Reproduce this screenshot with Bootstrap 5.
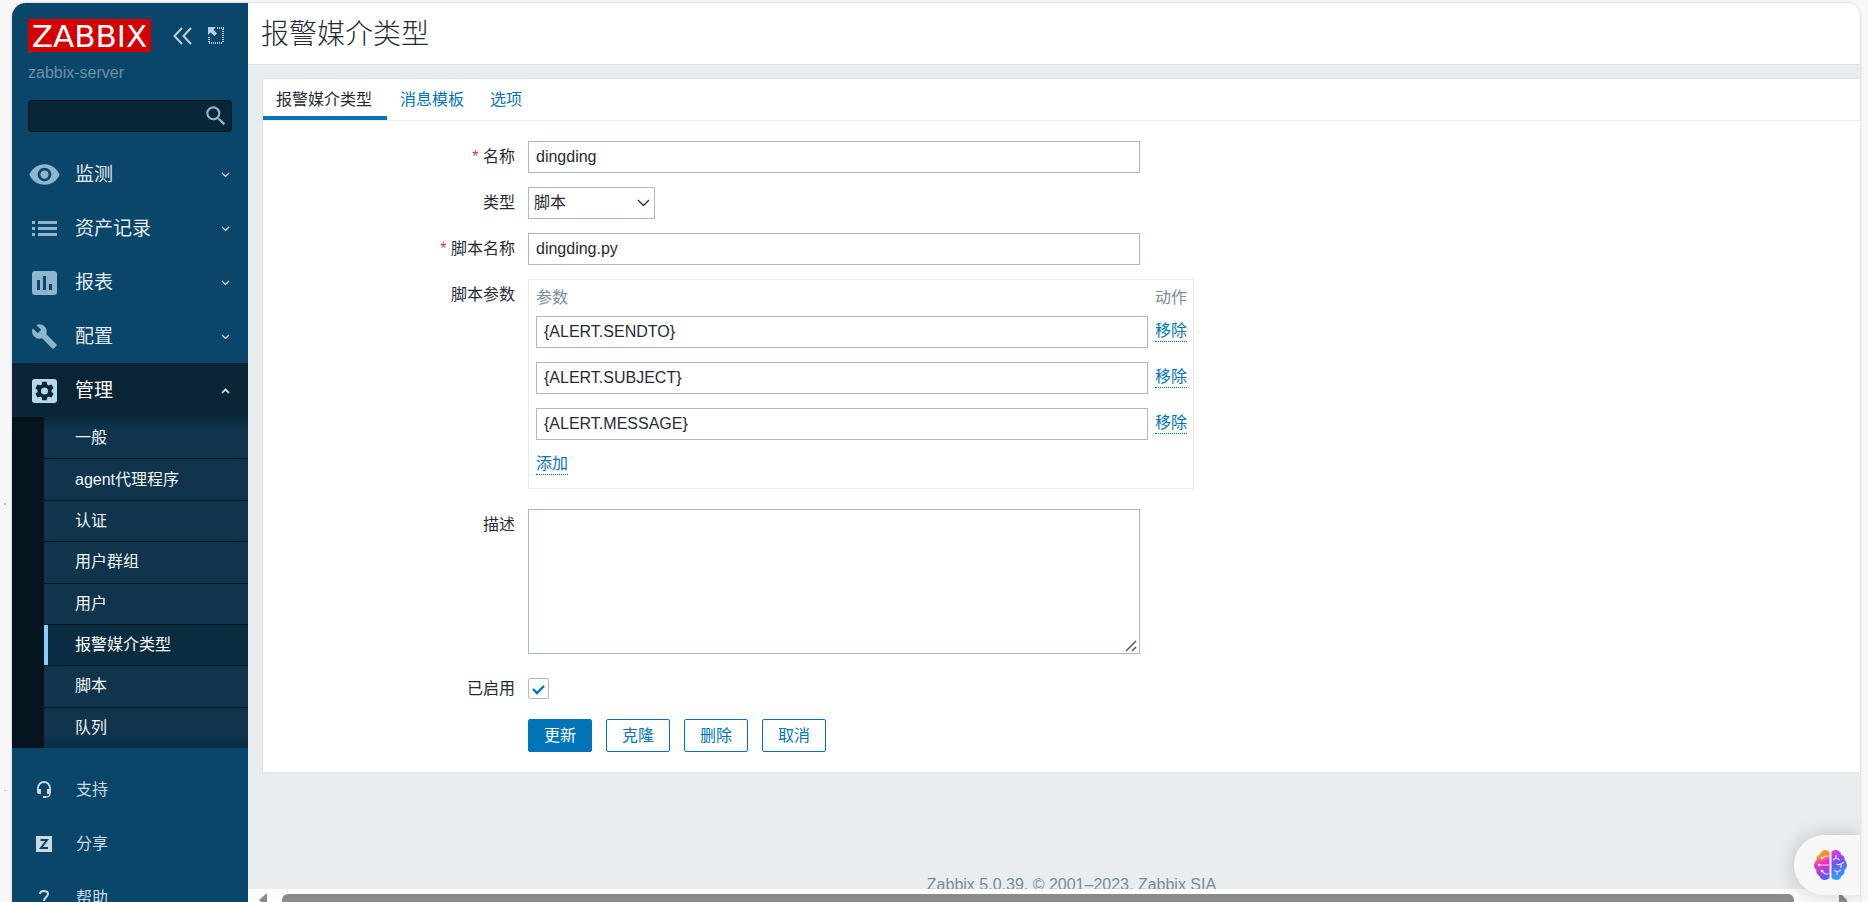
<!DOCTYPE html>
<html lang="zh-CN">
<head>
<meta charset="utf-8">
<meta name="viewport" content="width=device-width, initial-scale=1">
<title>报警媒介类型</title>
<link rel="stylesheet" href="https://cdn.jsdelivr.net/npm/bootstrap@5.3.0/dist/css/bootstrap.min.css">
<style>
body{background:#f7f7f7;color:#1f2c33;font:400 16px/20px "Liberation Sans","Noto Sans CJK SC",sans-serif;padding:3px 8px 0 12px}
a{color:#0275b8;text-decoration:none}
.app-frame{border-radius:14px 14px 0 0;background:#e9edf0;box-shadow:0 0 2px 1px #dcdfe1}
/* sidebar */
.side{width:236px;background:#0a466a;color:#e2eaef}
.side a{color:inherit}
.side-head{padding:16px 16px 15px}
.logo{width:123px;height:33px;background:#d40000;color:#fff;font:31px/34px "DejaVu Sans",sans-serif}
.icon-btn{border:0;background:none;padding:0;color:#b8cfdd;display:flex}
.server{color:#6d8fa8;margin-top:11px}
.search{height:32px;background:#082638;border:1px solid #03121c;border-radius:4px;margin-top:17px}
.search input{min-width:0;background:none;border:0;color:#fff;outline:0}
.search button{padding-right:2px;color:#8fb3cd}
.menu-row{height:54px;padding:1px 18px 0 12px;font-size:19px}
.menu-row .pic{width:30px;margin:0 16px 0 5px;color:#8fb5cf}
.menu-row.open{background:#0a2535;color:#fff}
.menu-row.open .pic{color:#b5d8ee}
.pic{display:flex;justify-content:center;flex:none}
.sub{padding-left:32px;background:#04151f;box-shadow:inset 0 5px 6px -4px #0006}
.sub ul{display:grid;grid-auto-rows:1fr;min-height:331px;background:linear-gradient(#0b2a3e,#0f344c 12px,#0f344c 320px,#0c2c41)}
.sub a{height:100%;padding-left:27px;border-left:4px solid transparent;color:#f2f6f8;font-size:16px}
.sub li+li{border-top:1px solid #041520}
.sub a.chosen{border-left-color:#85ceff;background:#0a2c40;color:#fff}
.extra{padding-top:15px}
.extra a{height:54px;color:#cbd9e2}
.extra .pic{width:20px;margin:0 22px 0 22px}
/* page */
.page-head{height:62px;background:#fff;border-bottom:1px solid #dfe4e7;padding:2px 13px 0;flex:none}
.page-head h1{font-size:28px;line-height:36px}
.panel{background:#fff;border:1px solid #dfe4e7;border-right:0;margin:13px 0 0 14px}
.tabs{border-bottom:1px solid #ebeef0}
.tabs a{height:41px;padding:4px 13px 0;border-bottom:4px solid transparent}
.tabs a.on{padding-right:15px;border-color:#0275b8;color:#1f2c33}
.fields{padding:20px 0}
.line{display:flex;gap:13px;margin-bottom:14px}
.line>.cap{width:252px;flex:none;text-align:right;line-height:32px}
.star{color:#e33734}
.box{display:block;width:612px;height:32px;border:1px solid #acbbc2;border-radius:0;background:#fff;padding:0 7px;color:#1f2c33;outline:0}
.sel{position:relative}
.sel select{width:127px;appearance:none;padding:0 5px}
.sel svg{position:absolute;right:5px;top:11px;pointer-events:none}
.params{border:1px solid #e9ecee;padding:0 6px 0 7px;width:666px}
.params th{height:36px;font-weight:inherit;color:#768d99}
.params td,.params th{padding:0;vertical-align:top}
.params th{vertical-align:middle}
.params tbody td{height:46px}
.params td:last-child,.params th:last-child{text-align:right}
.params tfoot td{height:34px}
.dots{display:inline-block;border:0;border-bottom:1px dotted #0275b8;background:none;color:#0275b8;padding:0;line-height:20px;margin-top:5px}
.params tfoot .dots{margin-top:0}
textarea.box{height:145px}
textarea::-webkit-resizer{background:url("data:image/svg+xml,%3Csvg xmlns='http://www.w3.org/2000/svg' viewBox='0 0 15 15'%3E%3Cpath d='M2 13L12 3M8 13l4-4' stroke='%23555' stroke-width='1.500'/%3E%3C/svg%3E")}
.tick{appearance:none;width:21px;height:21px;margin:0;border:1px solid #acbbc2;border-radius:2px;background:#fff url("data:image/svg+xml,%3Csvg xmlns='http://www.w3.org/2000/svg' viewBox='0 0 19 19'%3E%3Cpath d='M4 10l4 4 7-7' fill='none' stroke='%230275b8' stroke-width='2.4'/%3E%3C/svg%3E")}
.act{width:64px;height:33px;border:1px solid #0275b8;border-radius:2px;background:#fff;color:#0275b8;padding:0;font-size:16px;line-height:20px}
.act.main-act{background:#0275b8;color:#fff}
.acts{gap:14px}
.foot{color:#768d99;margin:102px -35px 0 0;text-align:center}
.hscroll{height:13px;background:#fcfcfc;left:0;right:0;bottom:0;padding:0 13px 0 11px;gap:15px}
.hscroll i{height:8px;background:#8b8b8b;border-radius:6px 6px 0 0;margin-right:30px}
.assist{right:0;bottom:7px;width:66px;height:60px;border:0;border-radius:30px 0 0 30px;background:#f8f8f8;box-shadow:0 0 20px #0003;padding:0 13px 0 20px}
.speck{left:4px;width:2px;background:#bbb}
</style>
<script src="https://cdn.jsdelivr.net/npm/bootstrap@5.3.0/dist/js/bootstrap.bundle.min.js"></script>
</head>
<body class="vh-100 overflow-hidden">
<span class="speck position-absolute" style="top:503px;height:2px"></span>
<span class="speck position-absolute" style="top:790px;height:1px"></span>
<div class="app-frame d-flex h-100 overflow-hidden">
  <aside class="side flex-shrink-0">
    <div class="side-head">
      <div class="d-flex align-items-center">
        <a href="#" class="logo text-center text-white">ZABBIX</a>
        <button class="icon-btn ms-auto" aria-label="收起侧边栏"><svg width="19" height="18" viewBox="0 0 19 18" fill="none" stroke="currentColor" stroke-width="2"><path d="M9 1L1.500 9 9 17M18 1l-7.500 8 7.500 8"/></svg></button>
        <button class="icon-btn ms-3 me-2" aria-label="隐藏侧边栏"><svg width="16" height="17" viewBox="0 0 16 17"><path d="M0 0h8L5.500 2.500 9 6.500 6.500 9 2.500 5.500 0 8z" fill="currentColor"/><path d="M9 1h7M15 2v14M1 10v6M1 16h14" fill="none" stroke="currentColor" stroke-width="2" stroke-dasharray="1 1"/></svg></button>
      </div>
      <div class="server">zabbix-server</div>
      <form class="search d-flex align-items-center" role="search">
        <input type="text" class="flex-fill" aria-label="搜索">
        <button type="button" class="icon-btn" aria-label="搜索"><svg width="26" height="26" viewBox="0 0 24 24" fill="currentColor"><path d="M15.500 14h-.79l-.28-.27A6.470 6.470 0 0 0 16 9.500 6.500 6.500 0 1 0 9.500 16c1.610 0 3.090-.59 4.230-1.570l.27.28v.79l5 4.990L20.490 19l-4.990-5zm-6 0C7.010 14 5 11.990 5 9.500S7.010 5 9.500 5 14 7.010 14 9.500 11.990 14 9.500 14z"/></svg></button>
      </form>
    </div>
    <nav>
      <a href="#" class="menu-row d-flex align-items-center"><span class="pic"><svg width="33" height="33" viewBox="0 0 24 24" fill="currentColor" class="flex-shrink-0"><path d="M12 4.500C7 4.500 2.730 7.610 1 12c1.730 4.390 6 7.500 11 7.500s9.270-3.110 11-7.500c-1.730-4.390-6-7.500-11-7.500zM12 17a5 5 0 1 1 0-10 5 5 0 0 1 0 10zm0-8a3 3 0 1 0 0 6 3 3 0 0 0 0-6z"/></svg></span>监测<svg class="ms-auto" width="9" height="6" viewBox="0 0 9 6" fill="none" stroke="currentColor" stroke-width="1.200"><path d="M1 1l3.500 3.500L8 1"/></svg></a>
      <a href="#" class="menu-row d-flex align-items-center"><span class="pic"><svg width="25" height="15" viewBox="0 0 25 15" fill="currentColor"><path d="M0 0h3v3H0zM6 0h19v3H6zM0 6h3v3H0zM6 6h19v3H6zM0 12h3v3H0zM6 12h19v3H6z"/></svg></span>资产记录<svg class="ms-auto" width="9" height="6" viewBox="0 0 9 6" fill="none" stroke="currentColor" stroke-width="1.200"><path d="M1 1l3.500 3.500L8 1"/></svg></a>
      <a href="#" class="menu-row d-flex align-items-center"><span class="pic"><svg width="25" height="24" viewBox="0 0 25 24" fill="currentColor" fill-rule="evenodd"><path d="M3 0h19a3 3 0 0 1 3 3v18a3 3 0 0 1-3 3H3a3 3 0 0 1-3-3V3a3 3 0 0 1 3-3zM5 9v10h3V9zM11 5v14h3V5zM17 13v6h3v-6z"/></svg></span>报表<svg class="ms-auto" width="9" height="6" viewBox="0 0 9 6" fill="none" stroke="currentColor" stroke-width="1.200"><path d="M1 1l3.500 3.500L8 1"/></svg></a>
      <a href="#" class="menu-row d-flex align-items-center"><span class="pic"><svg width="27" height="27" viewBox="0 0 24 24" fill="currentColor"><path d="M22.700 19l-9.100-9.100c.9-2.300.4-5-1.500-6.900-2-2-5-2.400-7.400-1.300L9 6 6 9 1.600 4.700C.4 7.100.9 10.100 2.900 12.100c1.900 1.900 4.600 2.400 6.900 1.500l9.100 9.100c.4.4 1 .4 1.400 0l2.300-2.300c.5-.4.5-1.100.1-1.400z"/></svg></span>配置<svg class="ms-auto" width="9" height="6" viewBox="0 0 9 6" fill="none" stroke="currentColor" stroke-width="1.200"><path d="M1 1l3.500 3.500L8 1"/></svg></a>
      <a href="#" class="menu-row open d-flex align-items-center"><span class="pic"><svg width="25" height="24" viewBox="0 0 25 24"><rect width="25" height="24" rx="3" fill="currentColor"/><g transform="translate(.8 .3) scale(.975)"><path fill="#0a2535" d="M19.140 12.940c.04-.3.06-.61.06-.94s-.02-.64-.07-.94l2.030-1.580a.49.49 0 0 0 .12-.61l-1.920-3.320a.49.49 0 0 0-.59-.22l-2.390.96a7 7 0 0 0-1.620-.94l-.36-2.540a.48.48 0 0 0-.48-.41h-3.840a.48.48 0 0 0-.47.41l-.36 2.540c-.59.24-1.130.57-1.620.94l-2.390-.96a.48.48 0 0 0-.59.22L2.740 8.870a.48.48 0 0 0 .12.61l2.030 1.580a6 6 0 0 0 0 1.880l-2.030 1.580a.49.49 0 0 0-.12.61l1.920 3.320c.12.22.37.29.59.22l2.390-.96c.5.38 1.030.7 1.620.94l.36 2.540c.05.24.24.41.48.41h3.840c.24 0 .44-.17.47-.41l.36-2.540a7 7 0 0 0 1.620-.94l2.390.96c.22.08.47 0 .59-.22l1.920-3.320a.48.48 0 0 0-.12-.61zM12 15.600a3.600 3.600 0 1 1 0-7.200 3.600 3.600 0 0 1 0 7.200z"/></g></svg></span>管理<svg class="ms-auto" width="9" height="6" viewBox="0 0 9 6" fill="none" stroke="currentColor" stroke-width="1.600"><path d="M1 5l3.500-3.500L8 5"/></svg></a>
      <div class="sub">
        <ul class="list-unstyled mb-0">
          <li><a href="#" class="d-flex align-items-center">一般</a></li>
          <li><a href="#" class="d-flex align-items-center">agent代理程序</a></li>
          <li><a href="#" class="d-flex align-items-center">认证</a></li>
          <li><a href="#" class="d-flex align-items-center">用户群组</a></li>
          <li><a href="#" class="d-flex align-items-center">用户</a></li>
          <li><a href="#" class="d-flex align-items-center chosen" aria-current="page">报警媒介类型</a></li>
          <li><a href="#" class="d-flex align-items-center">脚本</a></li>
          <li><a href="#" class="d-flex align-items-center">队列</a></li>
        </ul>
      </div>
    </nav>
    <nav class="extra">
      <a href="#" class="d-flex align-items-center"><span class="pic"><svg width="16" height="18" viewBox="0 0 16 18" fill="none" stroke="currentColor"><path d="M2 10V7a6 6 0 0 1 12 0v3" stroke-width="1.800"/><path d="M14 10v3q0 3-5 3" stroke-width="1.300"/><path d="M1 8h4v5H3q-2 0-2-2zM11 8h4v3q0 2-2 2h-2zM7 15h3v2H7z" fill="currentColor" stroke="none"/></svg></span>支持</a>
      <a href="#" class="d-flex align-items-center"><span class="pic"><svg width="16" height="16" viewBox="0 0 16 16"><path fill="currentColor" d="M0 0h16v16H0z"/><path d="M4.500 4h6.500L5 12h7" fill="none" stroke="#0a466a" stroke-width="2"/></svg></span>分享</a>
      <a href="#" class="d-flex align-items-center"><span class="pic"><svg width="10" height="16" viewBox="0 0 10 16" fill="none" stroke="currentColor" stroke-width="2"><path d="M1 4q0-3 4-3t4 3c0 3-4 3-4 7M5 13v3"/></svg></span>帮助</a>
    </nav>
  </aside>

  <main class="flex-fill position-relative overflow-hidden d-flex flex-column">
    <header class="page-head d-flex align-items-center"><h1 class="mb-0 fw-light">报警媒介类型</h1></header>
    <section class="panel">
      <nav class="tabs d-flex">
        <a href="#" class="on d-flex align-items-center">报警媒介类型</a>
        <a href="#" class="d-flex align-items-center">消息模板</a>
        <a href="#" class="d-flex align-items-center">选项</a>
      </nav>
      <form class="fields">
        <div class="line"><label class="cap" for="name"><span class="star">*</span> 名称</label><input class="box" id="name" type="text" value="dingding"></div>
        <div class="line"><label class="cap" for="type">类型</label><div class="sel"><select class="box" id="type"><option>脚本</option></select><svg width="13" height="10" viewBox="0 0 13 10" fill="none" stroke="#1f2c33" stroke-width="1.300"><path d="M1 2l5.500 5.500L12 2"/></svg></div></div>
        <div class="line"><label class="cap" for="script"><span class="star">*</span> 脚本名称</label><input class="box" id="script" type="text" value="dingding.py"></div>
        <div class="line mb-0"><span class="cap">脚本参数</span>
          <div class="params">
            <table class="w-100">
              <thead><tr><th scope="col">参数</th><th scope="col">动作</th></tr></thead>
              <tbody>
                <tr><td><input class="box" type="text" aria-label="参数 1" value="{ALERT.SENDTO}"></td><td><button type="button" class="dots">移除</button></td></tr>
                <tr><td><input class="box" type="text" aria-label="参数 2" value="{ALERT.SUBJECT}"></td><td><button type="button" class="dots">移除</button></td></tr>
                <tr><td><input class="box" type="text" aria-label="参数 3" value="{ALERT.MESSAGE}"></td><td><button type="button" class="dots">移除</button></td></tr>
              </tbody>
              <tfoot><tr><td colspan="2" class="text-start"><button type="button" class="dots">添加</button></td></tr></tfoot>
            </table>
          </div>
        </div>
        <div class="line mb-4" style="margin-top:20px"><label class="cap" for="desc">描述</label><textarea class="box" id="desc"></textarea></div>
        <div class="line align-items-center mb-3"><label class="cap lh-sm" for="enabled">已启用</label><input class="tick" type="checkbox" id="enabled" checked></div>
        <div class="line mt-1 pt-1 mb-0"><span class="cap"></span>
          <div class="d-flex acts">
            <button type="button" class="act main-act">更新</button>
            <button type="button" class="act">克隆</button>
            <button type="button" class="act">删除</button>
            <button type="button" class="act">取消</button>
          </div>
        </div>
      </form>
    </section>
    <footer class="foot">Zabbix 5.0.39. © 2001–2023, Zabbix SIA</footer>
    <div class="hscroll position-absolute d-flex align-items-end">
      <svg width="8" height="9" viewBox="0 0 8 9"><path d="M8 0v14L0 7z" fill="#8b8b8b"/></svg>
      <i class="flex-fill"></i>
      <svg width="8" height="7" viewBox="0 0 8 7"><path d="M0 0h3l5 5v2H0z" fill="#8b8b8b"/></svg>
    </div>
    <button class="assist position-absolute d-flex align-items-center" aria-label="AI 助手">
      <svg width="33" height="30" viewBox="0 0 33 30">
        <defs>
          <linearGradient id="lobeA" gradientUnits="userSpaceOnUse" x1="4" y1="2" x2="14" y2="28"><stop offset="0" stop-color="#ffa51f"/><stop offset=".2" stop-color="#f98a2f"/><stop offset=".42" stop-color="#f02bc4"/><stop offset="1" stop-color="#5a5cf5"/></linearGradient>
          <linearGradient id="lobeB" gradientUnits="userSpaceOnUse" x1="18" y1="2" x2="28" y2="28"><stop offset="0" stop-color="#d93be0"/><stop offset=".45" stop-color="#6a55f2"/><stop offset="1" stop-color="#2ea8ff"/></linearGradient>
        </defs>
        <path fill="url(#lobeA)" d="M15.500 2v26q-2 2-5 2-4 0-5-4-4-2-3-6-2.500-2-2.500-5t2.500-5q-.5-4 3-5 1-4 5-5 3-.5 5 2z"/>
        <path fill="url(#lobeB)" d="M17.500 2v26q2 2 5 2 4 0 5-4 4-2 3-6 2.500-2 2.500-5t-2.500-5q.5-4-3-5-1-4-5-5-3-.5-5 2z"/>
        <g fill="none" stroke="#fff" stroke-opacity=".75" stroke-width="1.200"><path d="M15 6h-3L8 8M6 15h9M15 24h-4l-3-3M22 5v3l-3 2M22 8l4 2M22 14q4 2 8-2M27 15v3M20 20l3 2 4-2M23 22v3"/></g>
        <g fill="#fff"><circle cx="8" cy="8" r="1.300"/><circle cx="5" cy="15" r="1.300"/><circle cx="8" cy="21" r="1.300"/></g>
      </svg>
    </button>
  </main>
</div>
</body>
</html>
